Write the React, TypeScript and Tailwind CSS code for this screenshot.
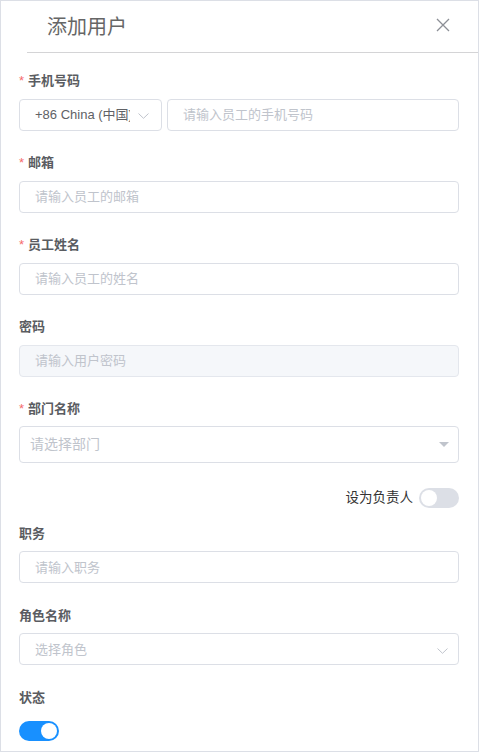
import React from "react";

const font = { fontFamily: '"Liberation Sans", "Noto Sans CJK SC", sans-serif' };

function Label({ text, required, h = "h-[36px]" }: { text: string; required?: boolean; h?: string }) {
  return (
    <div className={`${h} flex items-center text-[13px] font-bold text-[#5a5c61]`}>
      {required && <span className="text-[#f56c6c] mr-[4px] font-normal">*</span>}
      <span>{text}</span>
    </div>
  );
}

function Input({ placeholder, disabled }: { placeholder: string; disabled?: boolean }) {
  return (
    <div
      className={`h-[32px] border border-[#dcdfe6] rounded-[4px] px-[15px] flex items-center text-[13px] text-[#c0c4cc] ${
        disabled ? "bg-[#f5f7fa] border-[#e4e7ed]" : "bg-white"
      }`}
    >
      {placeholder}
    </div>
  );
}

function Chevron({ className }: { className?: string }) {
  return (
    <svg className={className} width="11" height="6" viewBox="0 0 11 6" fill="none">
      <path d="M0.5 0.5 L5.5 5.3 L10.5 0.5" stroke="#c0c4cc" strokeWidth="1" />
    </svg>
  );
}

function Toggle({ on }: { on?: boolean }) {
  return (
    <div
      className={`w-[40px] h-[20px] rounded-full relative ${on ? "bg-[#1890ff]" : "bg-[#dcdfe6]"}`}
    >
      <div
        className={`absolute top-[2px] w-[16px] h-[16px] rounded-full bg-white ${on ? "left-[22px]" : "left-[2px]"}`}
      />
    </div>
  );
}

export default function App() {
  return (
    <div style={font} className="w-[479px] h-[752px] border border-[#dcdfe6] bg-white overflow-hidden">
      <div className="ml-[26px] h-[52px] border-b border-[#d4d4d6] flex items-center justify-between pl-[20px] pr-[28px]">
        <div className="text-[20px] text-[#666666]">添加用户</div>
        <svg width="14" height="14" viewBox="0 0 14 14" className="mt-[-3px]">
          <path d="M1 1 L13 13 M13 1 L1 13" stroke="#8c8f96" strokeWidth="1.3" />
        </svg>
      </div>

      <div className="pl-[18px] pr-[19px] pt-[10px]">
        {/* phone */}
        <Label text="手机号码" required />
        <div className="flex gap-[5px]">
          <div className="w-[143px] h-[32px] border border-[#dcdfe6] rounded-[4px] flex items-center pl-[15px] pr-[11px]">
            <div className="w-[95px] shrink-0 overflow-hidden whitespace-nowrap text-[13px] text-[#606266]">
              +86 China (中国)
            </div>
            <Chevron className="ml-[8px] mt-[2px]" />
          </div>
          <div className="flex-1">
            <Input placeholder="请输入员工的手机号码" />
          </div>
        </div>

        <div className="mt-[14px]">
          <Label text="邮箱" required />
          <Input placeholder="请输入员工的邮箱" />
        </div>

        <div className="mt-[14px]">
          <Label text="员工姓名" required />
          <Input placeholder="请输入员工的姓名" />
        </div>

        <div className="mt-[14px]">
          <Label text="密码" />
          <Input placeholder="请输入用户密码" disabled />
        </div>

        <div className="mt-[14px]">
          <Label text="部门名称" required h="h-[35px]" />
          <div className="h-[37px] border border-[#dcdfe6] rounded-[4px] pl-[10px] pr-[9px] flex items-center justify-between">
            <span className="text-[14px] text-[#c0c4cc]">请选择部门</span>
            <svg width="10" height="5" viewBox="0 0 10 5">
              <path d="M0 0 L10 0 L5 5 Z" fill="#c0c4cc" />
            </svg>
          </div>
        </div>

        <div className="mt-[25px] flex items-center justify-end gap-[6px]">
          <span className="text-[13.5px] text-[#333333]">设为负责人</span>
          <Toggle />
        </div>

        <div className="mt-[7px]">
          <Label text="职务" />
          <Input placeholder="请输入职务" />
        </div>

        <div className="mt-[14px]">
          <Label text="角色名称" />
          <div className="h-[32px] border border-[#dcdfe6] rounded-[4px] pl-[15px] pr-[10px] flex items-center justify-between">
            <span className="text-[13px] text-[#c0c4cc]">选择角色</span>
            <Chevron className="mt-[3px]" />
          </div>
        </div>

        <div className="mt-[14px]">
          <Label text="状态" />
          <div className="mt-[6px]">
            <Toggle on />
          </div>
        </div>
      </div>
    </div>
  );
}
